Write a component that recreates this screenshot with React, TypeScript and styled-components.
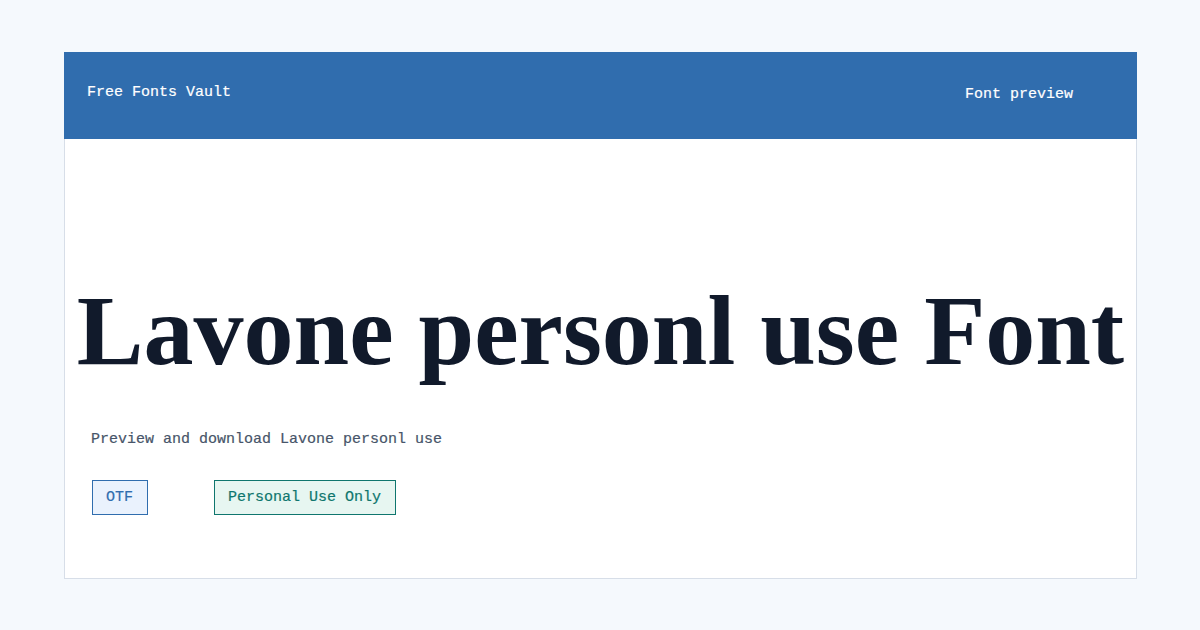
import React from 'react';
import styled, { createGlobalStyle } from 'styled-components';

const GlobalStyle = createGlobalStyle`
	* {
		box-sizing: border-box;
	}
	body {
		margin: 0;
		background: #f5f9fd;
		font-family: 'Liberation Mono', 'Courier New', monospace;
		-webkit-text-stroke: 0.2px currentColor;
	}
`;

const badges = [
	{ label: 'OTF', tone: 'format' as const },
	{ label: 'Personal Use Only', tone: 'license' as const },
];

export default function App() {
	return (
		<>
			<GlobalStyle />
			<Page>
				<Card>
					<Header>
						<Brand>Free Fonts Vault</Brand>
						<Nav>Font preview</Nav>
					</Header>
					<Body>
						<Title>Lavone personl use Font</Title>
						<Subtitle>Preview and download Lavone personl use</Subtitle>
						<BadgeRow>
							{badges.map((b) => (
								<Badge key={b.label} tone={b.tone}>
									{b.label}
								</Badge>
							))}
						</BadgeRow>
					</Body>
				</Card>
			</Page>
		</>
	);
}

const Page = styled.div`
	width: 1200px;
	height: 630px;
	padding: 52px 63px 0 64px;
`;

const Card = styled.div`
	width: 1073px;
	height: 527px;
	background: #ffffff;
	border: 1px solid #d7dee8;
	display: flex;
	flex-direction: column;
`;

const Header = styled.header`
	height: 87px;
	margin: -1px -1px 0;
	background: #306dae;
	color: #ffffff;
	display: flex;
	align-items: center;
	justify-content: space-between;
	padding: 0 64px 0 23px;
	font-size: 15px;
`;

const Brand = styled.div`
	margin-top: -7px;
`;

const Nav = styled.nav`
	margin-top: -3px;
`;

const Body = styled.main`
	flex: 1;
	display: flex;
	flex-direction: column;
	padding: 132px 26px 0;
`;

const Title = styled.h1`
	margin: 0 -26px;
	font-family: 'Liberation Serif', 'Times New Roman', serif;
	font-weight: 700;
	font-size: 100px;
	line-height: 120px;
	color: #111a2b;
	text-align: center;
	white-space: nowrap;
	-webkit-text-stroke: 0;
`;

const Subtitle = styled.p`
	margin: 38px 0 0;
	font-size: 15px;
	line-height: 22px;
	color: #475569;
`;

const BadgeRow = styled.div`
	display: flex;
	gap: 66px;
	margin-top: 29px;
	padding-left: 1px;
`;

const Badge = styled.span<{ tone: 'format' | 'license' }>`
	height: 35px;
	display: inline-flex;
	align-items: center;
	padding: 0 14px 0 13px;
	font-size: 15px;
	border: 1px solid ${({ tone }) => (tone === 'format' ? '#306dae' : '#0f766e')};
	background: ${({ tone }) => (tone === 'format' ? '#eaf2fd' : '#e7f6f1')};
	color: ${({ tone }) => (tone === 'format' ? '#306dae' : '#0f766e')};
`;
